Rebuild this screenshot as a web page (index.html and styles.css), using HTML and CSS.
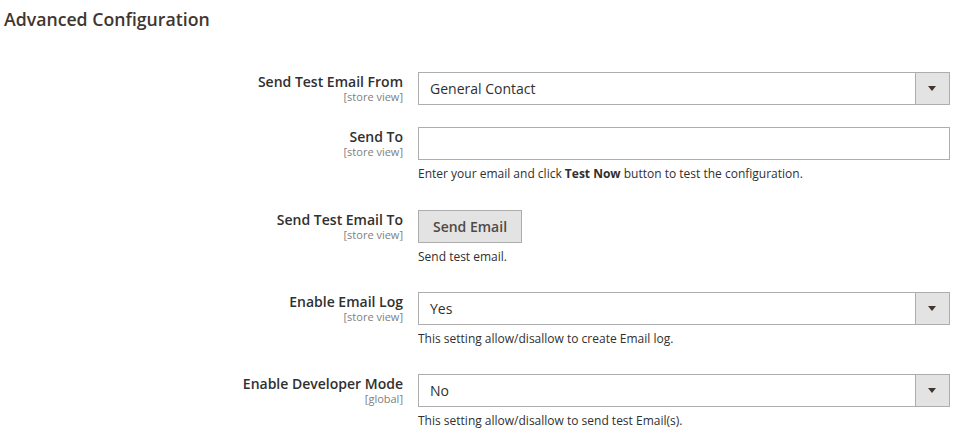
FILE: index.html
```html
<!DOCTYPE html>
<html lang="en">
  <head>
    <meta charset="UTF-8" />
    <meta name="viewport" content="width=device-width, initial-scale=1.0" />
    <title>Advanced Configuration</title>
    <link rel="stylesheet" href="styles.css">
  </head>
  <body>
    <h1 class="section-title">Advanced Configuration</h1>

    <div class="config-form">
      <!-- Send Test Email From -->
      <div class="config-row">
        <div class="field-label">
          <span class="label-text">Send Test Email From</span>
          <span class="scope">[store view]</span>
        </div>
        <div class="field-control">
          <div class="select">
            <span class="select-value">General Contact</span>
            <span class="select-arrow"></span>
          </div>
        </div>
      </div>

      <!-- Send To -->
      <div class="config-row has-note tall-note">
        <div class="field-label">
          <span class="label-text">Send To</span>
          <span class="scope">[store view]</span>
        </div>
        <div class="field-control">
          <input type="text" class="text-input" />
          <p class="note">Enter your email and click <b>Test Now</b> button to test the configuration.</p>
        </div>
      </div>

      <!-- Send Test Email To -->
      <div class="config-row has-note">
        <div class="field-label">
          <span class="label-text">Send Test Email To</span>
          <span class="scope">[store view]</span>
        </div>
        <div class="field-control">
          <button class="btn">Send Email</button>
          <p class="note">Send test email.</p>
        </div>
      </div>

      <!-- Enable Email Log -->
      <div class="config-row has-note">
        <div class="field-label">
          <span class="label-text">Enable Email Log</span>
          <span class="scope">[store view]</span>
        </div>
        <div class="field-control">
          <div class="select">
            <span class="select-value">Yes</span>
            <span class="select-arrow"></span>
          </div>
          <p class="note">This setting allow/disallow to create Email log.</p>
        </div>
      </div>

      <!-- Enable Developer Mode -->
      <div class="config-row has-note">
        <div class="field-label">
          <span class="label-text">Enable Developer Mode</span>
          <span class="scope">[global]</span>
        </div>
        <div class="field-control">
          <div class="select">
            <span class="select-value">No</span>
            <span class="select-arrow"></span>
          </div>
          <p class="note">This setting allow/disallow to send test Email(s).</p>
        </div>
      </div>
    </div>
  </body>
</html>
```

FILE: styles.css
```css
/* General styles */
body {
  font-family: "Open Sans", "Liberation Sans", sans-serif;
  background-color: #fff;
  margin: 0;
  padding: 0 12px 0 4px;
  color: #303030;
}

.section-title {
  font-size: 17.7px;
  font-weight: 600;
  color: #41362f;
  margin: 0;
  padding-top: 7px;
  line-height: 24px;
}

/* Form rows */
.config-form {
  margin-top: 41px;
}

.config-row {
  display: grid;
  grid-template-columns: 399px 532px;
  column-gap: 15px;
  margin-bottom: 22px;
}

.config-row.has-note {
  margin-bottom: 27px;
}

.config-row.tall-note {
  margin-bottom: 28px;
}

.field-label {
  text-align: right;
  padding-top: 2px;
}

.label-text {
  display: block;
  font-size: 14px;
  font-weight: 600;
  line-height: 15px;
  color: #303030;
}

.scope {
  display: block;
  font-size: 11px;
  line-height: 11px;
  margin-top: 2px;
  color: #808080;
}

/* Controls */
.select {
  display: flex;
  align-items: center;
  height: 33px;
  box-sizing: border-box;
  border: 1px solid #adadad;
  background-color: #fff;
}

.select-value {
  flex: 1;
  font-size: 14px;
  padding-left: 11px;
  color: #303030;
}

.select-arrow {
  width: 33px;
  height: 100%;
  background-color: #e3e3e3;
  border-left: 1px solid #adadad;
  position: relative;
}

.select-arrow::after {
  content: "";
  position: absolute;
  left: 12px;
  top: 13px;
  border-left: 4.5px solid transparent;
  border-right: 4.5px solid transparent;
  border-top: 5px solid #41362f;
}

.text-input {
  display: block;
  width: 100%;
  height: 33px;
  box-sizing: border-box;
  border: 1px solid #adadad;
  margin: 0;
  font-family: inherit;
  font-size: 14px;
}

.btn {
  display: block;
  height: 33px;
  width: 104px;
  box-sizing: border-box;
  border: 1px solid #adadad;
  background-color: #e3e3e3;
  color: #514943;
  font-family: inherit;
  font-size: 14px;
  font-weight: 600;
  padding: 0;
}

.note {
  font-size: 12px;
  line-height: 17px;
  margin: 5px 0 0;
  color: #303030;
}

.note b {
  font-weight: 700;
}
```
